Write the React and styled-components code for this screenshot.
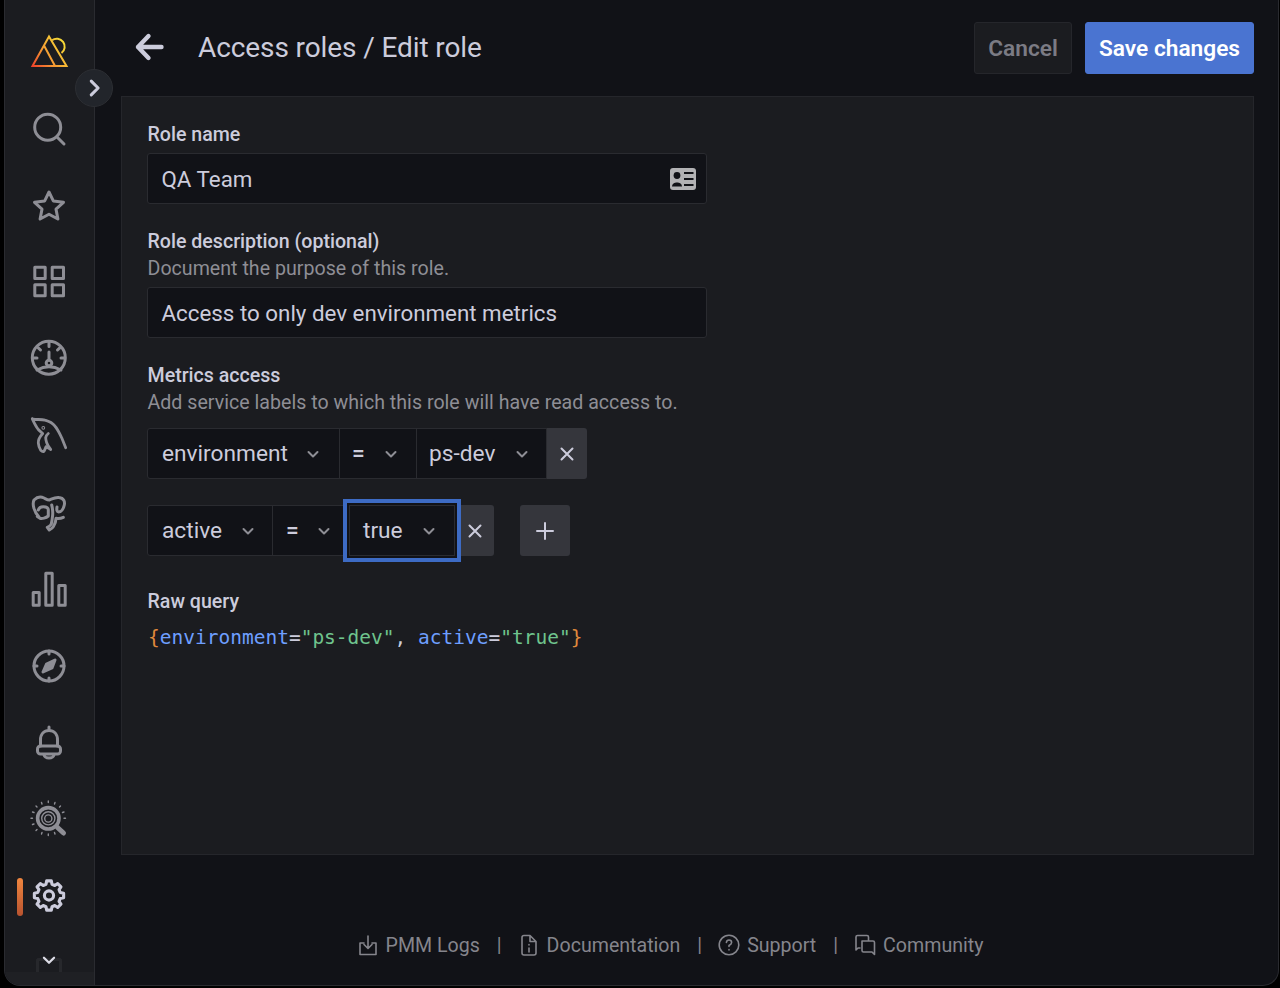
import React from 'react';
import styled, { createGlobalStyle } from 'styled-components';

const Global = createGlobalStyle`
  html, body { margin: 0; padding: 0; background: #000; }
  body { font-family: Roboto, "Liberation Sans", sans-serif; color: #ccccdc; }
  * { box-sizing: border-box; }
`;

const Page = styled.div`
  width: 1280px; height: 988px; background: #000; overflow: hidden;
  padding: 0 1px 2px 4px;
`;
const Frame = styled.div`
  position: relative; display: flex; height: 986px; background: #111217;
  border: 1px solid #2a2b30; border-top: 0;
  border-radius: 0 0 16px 16px; overflow: hidden;
`;
const Sidebar = styled.nav`
  position: relative; flex: 0 0 90px; width: 90px; height: 100%; background: #1b1c20;
  border-right: 1px solid #2a2b30; padding-top: 14px;
  display: flex; flex-direction: column;
`;
const NavItem = styled.div`
  position: relative; height: 76.7px; flex: none;
  display: flex; align-items: center; justify-content: center; padding-right: 1px;
  color: ${p => (p.$active ? '#ccccdc' : '#8e8e95')};
  svg { display: block; }
`;
const ActiveBar = styled.span`
  position: absolute; left: 12px; top: 20px; width: 6px; height: 38px; border-radius: 3px;
  background: linear-gradient(180deg, #f0863f 0%, #b8532f 100%);
`;
const MoreRow = styled.div`
  position: relative; height: 51px; display: flex; justify-content: center; padding: 17px 1px 0 0; color: #dcdce6;
  svg { position: relative; z-index: 1; }
`;
const GhostIcon = styled.span`
  position: absolute; top: 24px; left: 31px; width: 26px; height: 16px;
  border: 3px solid #27282c; border-bottom: 0; border-radius: 3px 3px 0 0;
`;
const SideFoot = styled.div`
  position: absolute; left: 0; right: 0; bottom: 0; height: 13px; background: #1f2024;
`;
const Toggle = styled.button`
  position: absolute; left: 70px; top: 69px; width: 38px; height: 38px; border-radius: 50%;
  background: #22252b; border: 1px solid #2c2e33; color: #ccccdc; padding: 0 1px 0 0; z-index: 3;
  display: flex; align-items: center; justify-content: center;
`;
const Main = styled.main`
  flex: 1; min-width: 0; display: flex; flex-direction: column; padding: 22px 24px 0 26px;
`;
const Header = styled.header`
  height: 52px; display: flex; align-items: center; gap: 13px;
`;
const BackLink = styled.span`
  width: 30px; height: 30px; margin: 0 21px 0 13px; flex: none; color: #ccccdc;
  position: relative; top: -1px;
`;
const Title = styled.h1`
  flex: 1; margin: 0; font-size: 28px; font-weight: 400; line-height: 50px; color: #ccccdc;
  letter-spacing: -0.1px;
`;
const Button = styled.button`
  height: 52px; border-radius: 3px; font: 600 22.7px/1 Roboto, sans-serif; padding: 2px 0 0;
  width: ${p => p.$w}px;
  background: ${p => (p.$primary ? '#4a74d1' : '#1b1c20')};
  color: ${p => (p.$primary ? '#fff' : '#7b7b84')};
  border: 1px solid ${p => (p.$primary ? '#4a74d1' : '#25262b')};
`;
const Panel = styled.section`
  margin-top: 22px; height: 759px; background: #1b1c20; border: 1px solid #25262b;
  padding: 26px 25px 0;
`;
const Label = styled.div`
  font-size: 19.6px; font-weight: 500; line-height: 24px; color: #ccccdc; margin: ${p => p.$mt || 0}px 0 0 0.5px;
`;
const Hint = styled.div`
  font-size: 19.6px; line-height: 24px; color: #8e8e95; margin: 3px 0 0 0.5px; letter-spacing: 0.02px;
`;
const InputBox = styled.div`
  margin-top: 6px; width: 560px; height: 51px; background: #111217; border: 1px solid #2a2b30;
  border-radius: 3px; padding: 1px 10px 0 13.5px; display: flex; align-items: center; justify-content: space-between;
  font-size: 22.35px; color: #ccccdc;
`;
const Row = styled.div`
  display: flex; align-items: stretch; height: 51px; margin-top: ${p => p.$mt}px;
`;
const Select = styled.div`
  position: relative; width: ${p => p.$w}px; height: 51px; flex: none; display: flex; align-items: center;
  justify-content: space-between; background: #111217; border: 1px solid #2a2b30;
  margin-left: ${p => (p.$first ? 0 : -1)}px; padding: 0 ${p => p.$pr || 17}px 0 ${p => p.$pl || 13}px;
  font-size: 22.7px; color: #ccccdc;
  border-radius: ${p => (p.$first ? '3px 0 0 3px' : 0)};
  ${p => p.$focus && 'z-index: 2; box-shadow: 0 0 0 2px #111217, 0 0 0 6px #3d6bc4;'}
  svg { color: #8e8e95; flex: none; }
`;
const OpText = styled.span`font-weight: 500;`;
const IconBtn = styled.button`
  width: ${p => p.$w}px; height: 51px; flex: none; border: 0; padding: 0; color: #ccccdc;
  background: #35363c; border-radius: ${p => (p.$round ? '3px' : '0 3px 3px 0')};
  margin-left: ${p => p.$ml || 0}px; display: flex; align-items: center; justify-content: center;
`;
const Code = styled.div`
  margin: 12px 0 0 1px; font: 400 19.5px/24px "DejaVu Sans Mono", "Liberation Mono", monospace; color: #ccccdc;
  white-space: pre;
`;
const Tok = styled.span`color: ${p => p.$c};`;
const Footer = styled.footer`
  margin: 76px 0 0 -35px; display: flex; align-items: center; justify-content: center; height: 28px;
  color: #85858c; font-size: 19.6px;
`;
const FootLink = styled.span`display: flex; align-items: center; gap: 7px; svg { display: block; }`;
const Sep = styled.span`margin: 0 16px 0 17px; font-size: 19.6px; color: #85858c;`;

const S = ({ children, size = 40, sw = 3 }) => (
  <svg width={size} height={size} viewBox="0 0 40 40" fill="none" stroke="currentColor" strokeWidth={sw} strokeLinecap="round" strokeLinejoin="round">{children}</svg>
);

const Logo = () => (
  <svg width="40" height="40" viewBox="0 0 40 40" fill="none" strokeWidth="2">
    <defs>
      <linearGradient id="lg" x1="2" y1="35" x2="34" y2="12" gradientUnits="userSpaceOnUse">
        <stop offset="0" stopColor="#ef3b2a" />
        <stop offset=".45" stopColor="#f59433" />
        <stop offset="1" stopColor="#f6d836" />
      </linearGradient>
    </defs>
    <path d="M20 4.5 L3.5 34 H37.5 Z M15 13.5 L26 34" stroke="url(#lg)" />
    <path d="M23 8.3 A7 7 0 1 1 32.5 21" stroke="url(#lg)" />
  </svg>
);
const Search = () => <S><circle cx="18.7" cy="18.2" r="13" /><path d="M28.5 28.5 L35 35" /></S>;
const Star = () => <S><path d="M20 6 L24.3 14.9 L34.5 16.3 L27 23.1 L28.9 33 L20 28.2 L11.1 33 L13 23.1 L5.5 16.3 L15.7 14.9 Z" /></S>;
const Grid = () => <S><rect x="5.8" y="5.2" width="10.4" height="11.3" /><rect x="23.2" y="5.2" width="11.3" height="11.3" /><rect x="5.8" y="22.8" width="10.4" height="11" /><rect x="23.2" y="22.8" width="11.3" height="11" /></S>;
const Gauge = () => (
  <S>
    <circle cx="19.8" cy="18.7" r="16.5" />
    <circle cx="20" cy="24" r="2.8" />
    <path d="M20 21 V13 M20 4 V7.5 M9.2 8.8 L11.5 11 M30.8 8.8 L28.5 11 M5 19 H8 M35 19 H32 M8 31 Q20 24.5 32 31" />
  </S>
);
const Dolphin = () => (
  <S sw={2.8}>
    <g transform="translate(0 -1.5)">
      <path d="M3.3 4.3 C7 5.5 12 4.5 16 5.7 C21 7 24 9 26 11.7 C29 15 31 20 32.7 23.3 L36.7 33.3 M3.3 4.3 C5 8 7 12 9.3 15 C11 17 13 18 13.7 19 C11 22 9 25 9.3 28.3 C9.5 31 10.5 34 11.7 35.7 C13 37 14.5 37 15 36.7 C16 35 16.5 33.5 17 32.3 C18.5 33 20 34 21.7 35 C20 33 18.5 30.5 17.7 28.3 C17 26 16.7 24.5 16.7 23.3 C17 21.5 18 20 19.3 19" />
      <circle cx="14.3" cy="13.3" r=".5" />
    </g>
  </S>
);
const Elephant = () => (
  <S sw={3}>
    <path d="M10 25 C5 20 3 12 5 8 C8 5 12 4.5 15 6 C17 7 18.5 8 20.3 8 C23 7 26 5 30 5.5 C35 6 36 10 35.3 13 C34.5 17 32 20 29.5 20 C28 20 27.5 18 28 15 M9.3 18 C10 15.5 12 14.7 14.3 14.7 C18 14.7 19.3 16 19.3 18 V24 C17 26 13 27 11 26.3 L8.3 24.5 M22.7 13 C24 18 24 22 23.3 26 C23 30 22 33 21.7 33 C20 34.5 18.3 35.3 18.3 35.3 L20.3 38 C22 37 24 35.5 24.3 34.7 C26 32 27 29 27 26.3 C29 26.8 32 26.5 34.3 25.3" />
  </S>
);
const Bars = () => (
  <S>
    <rect x="4.2" y="23.5" width="6" height="12.7" /><rect x="16.8" y="4.2" width="6.4" height="32" /><rect x="29.8" y="16.5" width="6.4" height="19.7" />
  </S>
);
const Compass = () => (
  <S>
    <circle cx="20" cy="20" r="15" />
    <path d="M26 14 L23 22 L14 26 L17.5 18 Z" fill="currentColor" />
    <path d="M20 5 V8 M20 32 V35 M5 20 H8 M32 20 H35" />
  </S>
);
const Bell = () => (
  <S>
    <path d="M20 4 V7.5 M11.5 23 V17 C11.5 11 15 7.5 20 7.5 C25 7.5 28.5 11 28.5 17 V23" />
    <rect x="8.5" y="23" width="23" height="8" rx="3" />
    <path d="M15 32 C16 36 24 36 25 32" />
  </S>
);
const Qan = () => (
  <S sw={2}>
    <circle cx="19.3" cy="19.3" r="10.7" strokeWidth="3.6" />
    <circle cx="19.3" cy="19.3" r="6.6" strokeWidth="1.4" />
    <circle cx="19.3" cy="19.5" r="3.6" strokeWidth="1.4" />
    <path d="M28.5 28.5 L34.5 34" strokeWidth="5" />
    <path d="M19.3 2 V3.5 M19.3 35 V36.5 M2 19.3 H3.5 M35 19.3 H36.5 M7 7 L8 8 M31.5 7 L30.5 8 M7 31.5 L8 30.5 M3.5 13 L5 13.5 M3.5 25.5 L5 25 M35 13 L33.5 13.5 M12.5 3.5 L13 5 M26 3.5 L25.5 5 M12.5 35 L13 33.5 M26 35 L25.5 33.5" strokeWidth="1.4" />
  </S>
);
const cogPath = (() => {
  const pt = (r, deg) => {
    const a = (deg - 90) * Math.PI / 180;
    return `${(20 + r * Math.cos(a)).toFixed(2)} ${(19.5 + r * Math.sin(a)).toFixed(2)}`;
  };
  let d = '';
  for (let i = 0; i < 8; i++) {
    const c = i * 45;
    d += `${i ? 'L' : 'M'}${pt(11.6, c - 15)} L${pt(14.8, c - 9)} L${pt(14.8, c + 9)} L${pt(11.6, c + 15)} `;
  }
  return d + 'Z';
})();
const Gear = () => (
  <S sw={3.1}>
    <circle cx="20" cy="19.5" r="4.6" />
    <path d={cogPath} />
  </S>
);
const Chevron = ({ size = 16, sw = 2, dir = 'down' }) => (
  <svg width={size} height={size} viewBox="0 0 16 16" fill="none" stroke="currentColor" strokeWidth={sw} strokeLinecap="round" strokeLinejoin="round">
    <path d={dir === 'down' ? 'M3.5 6 L8 10.5 L12.5 6' : 'M6 3 L11 8 L6 13'} />
  </svg>
);
const Back = () => (
  <svg width="30" height="30" viewBox="0 0 30 30" fill="none" stroke="currentColor" strokeWidth="4.4" strokeLinecap="round" strokeLinejoin="round">
    <path d="M27.5 15 H4 M14.5 4 L4 15 L14.5 26" />
  </svg>
);
const IdCard = () => (
  <svg width="26" height="22" viewBox="0 0 26 22">
    <rect width="26" height="22" rx="3" fill="#b2b2b4" />
    <circle cx="7" cy="7.5" r="3.4" fill="#111217" />
    <path d="M2 18.5 C2 13 12 13 12 18.5 Z" fill="#111217" />
    <path d="M14 5 H23.5 M14 11 H23.5 M14 17 H23.5" stroke="#111217" strokeWidth="2" />
  </svg>
);
const Cross = () => (
  <svg width="16" height="16" viewBox="0 0 16 16" fill="none" stroke="currentColor" strokeWidth="2" strokeLinecap="round"><path d="M2.5 2.5 L13.5 13.5 M13.5 2.5 L2.5 13.5" /></svg>
);
const Plus = () => (
  <svg width="18" height="18" viewBox="0 0 18 18" fill="none" stroke="currentColor" strokeWidth="2" strokeLinecap="round"><path d="M9 1 V17 M1 9 H17" /></svg>
);
const F = ({ children }) => (
  <svg width="22" height="22" viewBox="0 0 22 22" fill="none" stroke="currentColor" strokeWidth="1.6" strokeLinecap="round" strokeLinejoin="round">{children}</svg>
);
const Download = () => <F><path d="M7 9 H3 V20.5 H19 V9 H15 M11 2 V14 M7 10.5 L11 14.5 L15 10.5" /></F>;
const FileInfo = () => <F><path d="M4 3.5 Q4 1.5 6 1.5 H12 L18 7.5 V19 Q18 21 16 21 H6 Q4 21 4 19 Z M12 1.5 V7.5 H18 M11 10.5 V11 M11 14 V18" /></F>;
const Help = () => <F><circle cx="11" cy="11" r="9.8" /><path d="M8.4 8.5 Q8.7 6 11 6 Q13.6 6 13.6 8.4 Q13.6 10 11 11.5 V12.5 M11 15.6 V16" /></F>;
const Chat = () => <F><path d="M6 14 H4 L2 16 V3 Q2 1.5 3.5 1.5 H13 Q14.5 1.5 14.5 3 V7 M8 7 H19 Q20.5 7 20.5 8.5 V20.5 L18 18 H9.5 Q8 18 8 16.5 Z" /></F>;

const nav = [Logo, Search, Star, Grid, Gauge, Dolphin, Elephant, Bars, Compass, Bell, Qan];
const footer = [[Download, 'PMM Logs'], [FileInfo, 'Documentation'], [Help, 'Support'], [Chat, 'Community']];

export default function App() {
  return (
    <Page>
      <Global />
      <Frame>
        <Sidebar>
          {nav.map((Icon, i) => <NavItem key={i}><Icon /></NavItem>)}
          <NavItem $active><ActiveBar /><Gear /></NavItem>
          <MoreRow><GhostIcon /><Chevron size={18} /></MoreRow>
          <SideFoot />
        </Sidebar>
        <Toggle><Chevron size={22} sw={2.2} dir="right" /></Toggle>
        <Main>
          <Header>
            <BackLink><Back /></BackLink>
            <Title>Access roles / Edit role</Title>
            <Button $w={98}>Cancel</Button>
            <Button $primary $w={169}>Save changes</Button>
          </Header>
          <Panel>
            <Label>Role name</Label>
            <InputBox>QA Team<IdCard /></InputBox>
            <Label $mt={26}>Role description (optional)</Label>
            <Hint>Document the purpose of this role.</Hint>
            <InputBox>Access to only dev environment metrics</InputBox>
            <Label $mt={26}>Metrics access</Label>
            <Hint>Add service labels to which this role will have read access to.</Hint>
            <Row $mt={13}>
              <Select $first $pl={14} $pr={18} $w={193}>environment<Chevron /></Select>
              <Select $pl={12} $w={78}><OpText>=</OpText><Chevron /></Select>
              <Select $pl={12} $pr={16} $w={131}>ps-dev<Chevron /></Select>
              <IconBtn $w={40}><Cross /></IconBtn>
            </Row>
            <Row $mt={26}>
              <Select $first $pl={14} $pr={16} $w={126}>active<Chevron /></Select>
              <Select $w={78}><OpText>=</OpText><Chevron /></Select>
              <Select $focus $w={106}>true<Chevron /></Select>
              <IconBtn $w={39}><Cross /></IconBtn>
              <IconBtn $round $w={50} $ml={26}><Plus /></IconBtn>
            </Row>
            <Label $mt={34}>Raw query</Label>
            <Code>
              <Tok $c="#e08a3c">{'{'}</Tok><Tok $c="#6e9fff">environment</Tok>=<Tok $c="#6fc48d">"ps-dev"</Tok>, <Tok $c="#6e9fff">active</Tok>=<Tok $c="#6fc48d">"true"</Tok><Tok $c="#e08a3c">{'}'}</Tok>
            </Code>
          </Panel>
          <Footer>
            {footer.map(([Icon, text], i) => (
              <React.Fragment key={text}>
                {i > 0 && <Sep>|</Sep>}
                <FootLink><Icon />{text}</FootLink>
              </React.Fragment>
            ))}
          </Footer>
        </Main>
      </Frame>
    </Page>
  );
}
